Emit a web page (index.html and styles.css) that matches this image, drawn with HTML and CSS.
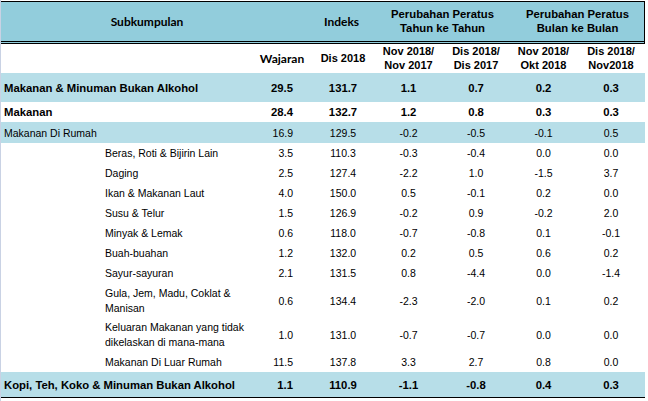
FILE: index.html
```html
<!DOCTYPE html>
<html>
<head>
<meta charset="utf-8">
<link rel="stylesheet" href="styles.css">
</head>
<body>
<div class="sheet">
  <div class="tbl">
    <div class="row hrow1">
      <div class="c span2 calibri subk">Subkumpulan</div>
      <div class="c calibri idxh">Indeks</div>
      <div class="c span2 hb">Perubahan Peratus<br>Tahun ke Tahun</div>
      <div class="c span2 hb">Perubahan Peratus<br>Bulan ke Bulan</div>
    </div>
    <div class="row hrow2">
      <div class="c"></div>
      <div class="c calibri wajh">Wajaran</div>
      <div class="c hb2 idxv">Dis 2018</div>
      <div class="c hb2">Nov 2018/<br>Nov 2017</div>
      <div class="c hb2">Dis 2018/<br>Dis 2017</div>
      <div class="c hb2">Nov 2018/<br>Okt 2018</div>
      <div class="c hb2">Dis 2018/<br>Nov2018</div>
    </div>
    <div class="row band bold h29">
      <div class="c lab">Makanan &amp; Minuman Bukan Alkohol</div>
      <div class="c waj">29.5</div>
      <div class="c idxv">131.7</div>
      <div class="c">1.1</div>
      <div class="c">0.7</div>
      <div class="c">0.2</div>
      <div class="c">0.3</div>
    </div>
    <div class="row bold h20">
      <div class="c lab">Makanan</div>
      <div class="c waj">28.4</div>
      <div class="c idxv">132.7</div>
      <div class="c">1.2</div>
      <div class="c">0.8</div>
      <div class="c">0.3</div>
      <div class="c">0.3</div>
    </div>
    <div class="row band h21">
      <div class="c lab">Makanan Di Rumah</div>
      <div class="c waj">16.9</div>
      <div class="c idxv">129.5</div>
      <div class="c">-0.2</div>
      <div class="c">-0.5</div>
      <div class="c">-0.1</div>
      <div class="c">0.5</div>
    </div>
    <div class="row h20">
      <div class="c sub">Beras, Roti &amp; Bijirin Lain</div>
      <div class="c waj">3.5</div>
      <div class="c idxv">110.3</div>
      <div class="c">-0.3</div>
      <div class="c">-0.4</div>
      <div class="c">0.0</div>
      <div class="c">0.0</div>
    </div>
    <div class="row h20">
      <div class="c sub">Daging</div>
      <div class="c waj">2.5</div>
      <div class="c idxv">127.4</div>
      <div class="c">-2.2</div>
      <div class="c">1.0</div>
      <div class="c">-1.5</div>
      <div class="c">3.7</div>
    </div>
    <div class="row h20">
      <div class="c sub">Ikan &amp; Makanan Laut</div>
      <div class="c waj">4.0</div>
      <div class="c idxv">150.0</div>
      <div class="c">0.5</div>
      <div class="c">-0.1</div>
      <div class="c">0.2</div>
      <div class="c">0.0</div>
    </div>
    <div class="row h20">
      <div class="c sub">Susu &amp; Telur</div>
      <div class="c waj">1.5</div>
      <div class="c idxv">126.9</div>
      <div class="c">-0.2</div>
      <div class="c">0.9</div>
      <div class="c">-0.2</div>
      <div class="c">2.0</div>
    </div>
    <div class="row h20">
      <div class="c sub">Minyak &amp; Lemak</div>
      <div class="c waj">0.6</div>
      <div class="c idxv">118.0</div>
      <div class="c">-0.7</div>
      <div class="c">-0.8</div>
      <div class="c">0.1</div>
      <div class="c">-0.1</div>
    </div>
    <div class="row h20">
      <div class="c sub">Buah-buahan</div>
      <div class="c waj">1.2</div>
      <div class="c idxv">132.0</div>
      <div class="c">0.2</div>
      <div class="c">0.5</div>
      <div class="c">0.6</div>
      <div class="c">0.2</div>
    </div>
    <div class="row h20">
      <div class="c sub">Sayur-sayuran</div>
      <div class="c waj">2.1</div>
      <div class="c idxv">131.5</div>
      <div class="c">0.8</div>
      <div class="c">-4.4</div>
      <div class="c">0.0</div>
      <div class="c">-1.4</div>
    </div>
    <div class="row h35">
      <div class="c sub two">Gula, Jem, Madu, Coklat &amp;<br>Manisan</div>
      <div class="c waj">0.6</div>
      <div class="c idxv">134.4</div>
      <div class="c">-2.3</div>
      <div class="c">-2.0</div>
      <div class="c">0.1</div>
      <div class="c">0.2</div>
    </div>
    <div class="row h33">
      <div class="c sub two">Keluaran Makanan yang tidak<br>dikelaskan di mana-mana</div>
      <div class="c waj">1.0</div>
      <div class="c idxv">131.0</div>
      <div class="c">-0.7</div>
      <div class="c">-0.7</div>
      <div class="c">0.0</div>
      <div class="c">0.0</div>
    </div>
    <div class="row h21">
      <div class="c sub">Makanan Di Luar Rumah</div>
      <div class="c waj">11.5</div>
      <div class="c idxv">137.8</div>
      <div class="c">3.3</div>
      <div class="c">2.7</div>
      <div class="c">0.8</div>
      <div class="c">0.0</div>
    </div>
    <div class="row band bold h25">
      <div class="c lab">Kopi, Teh, Koko &amp; Minuman Bukan Alkohol</div>
      <div class="c waj">1.1</div>
      <div class="c idxv">110.9</div>
      <div class="c">-1.1</div>
      <div class="c">-0.8</div>
      <div class="c">0.4</div>
      <div class="c">0.3</div>
    </div>
  </div>
</div>
</body>
</html>
```

FILE: styles.css
```css
html, body {
  margin: 0;
  padding: 0;
  background: #ffffff;
}

.sheet {
  width: 647px;
  height: 401px;
  border-left: 1px solid #c9d2e4;
  padding-top: 1px;
  box-sizing: border-box;
  font-family: "Liberation Sans", Arial, sans-serif;
  font-size: 10.5px;
  color: #000;
}

.tbl {
  width: 644px;
  border-top: 1px solid #000;
  border-bottom: 1px solid #000;
}

.row {
  display: grid;
  grid-template-columns: 257px 50px 67px 67px 68px 67px 68px;
  box-sizing: border-box;
}

.c {
  display: flex;
  align-items: center;
  justify-content: center;
  text-align: center;
  white-space: nowrap;
}

.span2 {
  grid-column: span 2;
}

.hrow1 {
  height: 42px;
  background: #92cddc;
  border-right: 1px solid #000;
  border-bottom: 3px double #000;
  font-weight: bold;
  font-size: 11.3px;
  line-height: 13.3px;
}

.hrow2 {
  height: 29px;
  font-weight: bold;
  font-size: 11px;
  line-height: 13.7px;
}

.calibri {
  font-family: Lato, "Open Sans", sans-serif;
  font-weight: bold;
  font-size: 12px;
}

.subk {
  padding-right: 15px;
}

.wajh {
  padding-right: 2px;
}

.band {
  background: #b7dee8;
}

.bold {
  font-weight: bold;
  font-size: 11.3px;
}

.h20 { height: 20px; }
.h21 { height: 21px; }
.h25 { height: 25px; }
.h29 { height: 29px; }
.h33 { height: 33px; }
.h35 { height: 35px; }

.lab {
  justify-content: flex-start;
  padding-left: 3px;
}

.sub {
  justify-content: flex-start;
  text-align: left;
  padding-left: 104px;
}

.two {
  line-height: 14.5px;
}

.waj {
  justify-content: flex-end;
  padding-right: 15px;
}

.idxv {
  padding-left: 3px;
}
```
